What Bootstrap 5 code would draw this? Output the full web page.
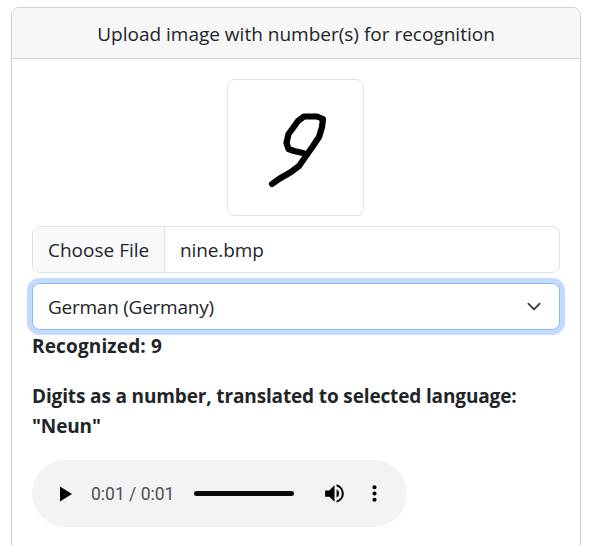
<!DOCTYPE html>
<html lang="en">
<head>
<meta charset="utf-8">
<meta name="viewport" content="width=device-width, initial-scale=1">
<title>Number recognition</title>
<link href="https://cdn.jsdelivr.net/npm/bootstrap@5.3.0/dist/css/bootstrap.min.css" rel="stylesheet">
<style>
html { font-size: 20px; }
body { font-family: "Open Sans", "Noto Sans", sans-serif; font-size: 19px; line-height: 30px; overflow: hidden; }
.form-control, .form-select { font-size: 19px; line-height: 30px; height: 47px; border-color: #dee2e6; }
.recognizer { margin: 7px 12px 0 11px; height: 560px; border-color: #d0d0d1; }
.recognizer .card-header { border-color: #d0d0d1; background: #f7f7f7; height: 51px; padding-top: 11px; padding-bottom: 9px; }
.preview { width: 137px; height: 137px; padding: 6px; border-color: #dee2e6; margin-right: 1px; }
.file-button { width: 132px; padding-left: 15px; background: #f8f9fa; border-right: 1px solid #dee2e6; }
.file-name { padding-left: 15px; letter-spacing: -.1px; }
.language { padding-left: 15px; letter-spacing: -.25px; border-color: #86b7fe; box-shadow: 0 0 0 5px #c2dbfe; background-size: 20px 15px; background-position: right 15px center; }
.result { font-weight: 700; font-size: 19px; letter-spacing: -.14px; padding-top: 1px; margin-bottom: 19px; }
.digits { letter-spacing: .15px; }
.player { width: 375px; height: 67px; background: #f1f3f4; }
.play-icon { margin-left: 18px; }
.time { font-family: Roboto, sans-serif; font-size: 17.5px; color: #4f5051; margin-left: 11px; width: 103px; white-space: nowrap; }
.track { width: 100px; height: 5px; background: #0a0a0b; }
.volume-icon { margin-left: 28px; }
.more-icon { margin-left: 15px; }
</style>
</head>
<body>
<div class="card recognizer">
  <div class="card-header text-center">Upload image with number(s) for recognition</div>
  <div class="card-body">
    <div class="d-flex justify-content-center">
      <svg class="img-thumbnail preview" viewBox="234 86 123 123" role="img" aria-label="Handwritten nine">
        <path d="M272 184L279 179L291 172L299 166L306 156L313 146L319 137L322 127L323 119L317 116.500L304 116.500L298 121L293 128L288.500 134L286.500 143L288.500 149L294 151L303 153" fill="none" stroke="#000" stroke-width="6.200" stroke-linecap="round" stroke-linejoin="round"/>
      </svg>
    </div>
    <div class="form-control d-flex p-0 overflow-hidden mb-2 mt-2">
      <span class="file-button d-flex align-items-center text-nowrap">Choose File</span>
      <span class="file-name d-flex align-items-center">nine.bmp</span>
    </div>
    <select class="form-select language" aria-label="Language"><option>German (Germany)</option></select>
    <p class="result digits">Recognized: 9</p>
    <p class="result">Digits as a number, translated to selected language: "Neun"</p>
    <div class="player rounded-pill d-flex align-items-center">
      <svg class="play-icon" width="30" height="30" viewBox="0 0 30 30"><path d="M10 7.500v15L22 15z"/></svg>
      <span class="time">0:01 / 0:01</span>
      <span class="track rounded-pill"></span>
      <svg class="volume-icon" width="25" height="25" viewBox="0 0 24 24"><path d="M3 9v6h4l5 5V4L7 9H3zm13.500 3A4.500 4.500 0 0 0 14 7.970v8.050A4.480 4.480 0 0 0 16.500 12zM14 3.230v2.060a7 7 0 0 1 0 13.420v2.060a9 9 0 0 0 0-17.540z"/></svg>
      <svg class="more-icon" width="25" height="25" viewBox="0 0 24 24"><path d="M12 8a2 2 0 1 0 0-4 2 2 0 0 0 0 4zm0 2a2 2 0 1 0 0 4 2 2 0 0 0 0-4zm0 6a2 2 0 1 0 0 4 2 2 0 0 0 0-4z"/></svg>
    </div>
  </div>
</div>
<script src="https://cdn.jsdelivr.net/npm/bootstrap@5.3.0/dist/js/bootstrap.bundle.min.js"></script>
</body>
</html>
